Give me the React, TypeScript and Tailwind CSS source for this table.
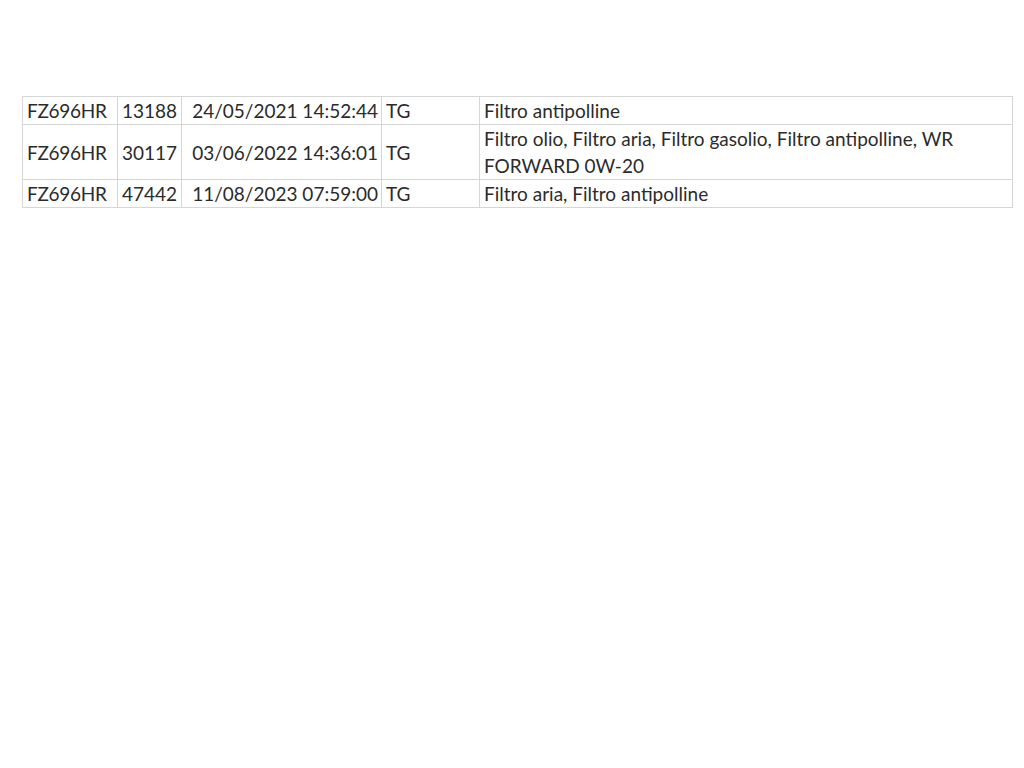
import React from "react";

const rows = [
  { plate: "FZ696HR", km: "13188", date: "24/05/2021 14:52:44", code: "TG", items: ["Filtro antipolline"] },
  {
    plate: "FZ696HR",
    km: "30117",
    date: "03/06/2022 14:36:01",
    code: "TG",
    items: ["Filtro olio, Filtro aria, Filtro gasolio, Filtro antipolline, WR", "FORWARD 0W-20"],
  },
  { plate: "FZ696HR", km: "47442", date: "11/08/2023 07:59:00", code: "TG", items: ["Filtro aria, Filtro antipolline"] },
];

export default function App() {
  return (
    <div className="min-h-[768px] w-full bg-white pt-[96px] pl-[22px] font-['Lato',sans-serif] text-[19px] text-[#2b2b2b]">
      <table className="w-[990px] table-fixed border-collapse">
        <colgroup>
          <col className="w-[95px]" />
          <col className="w-[64px]" />
          <col className="w-[200px]" />
          <col className="w-[98px]" />
          <col className="w-[533px]" />
        </colgroup>
        <tbody>
          {rows.map((r) => (
            <tr key={r.km}>
              <td className="border border-[#d6d6d6] px-[4px] leading-[27px] whitespace-nowrap align-middle tracking-[-0.3px]">{r.plate}</td>
              <td className="border border-[#d6d6d6] px-[4px] leading-[27px] text-right align-middle">{r.km}</td>
              <td className="border border-[#d6d6d6] px-[3px] leading-[27px] text-right whitespace-nowrap align-middle">{r.date}</td>
              <td className="border border-[#d6d6d6] px-[4px] leading-[27px] align-middle">{r.code}</td>
              <td className="border border-[#d6d6d6] px-[4px] leading-[27px] align-middle">
                {r.items.map((line, i) => (
                  <div key={i}>{line}</div>
                ))}
              </td>
            </tr>
          ))}
        </tbody>
      </table>
    </div>
  );
}
